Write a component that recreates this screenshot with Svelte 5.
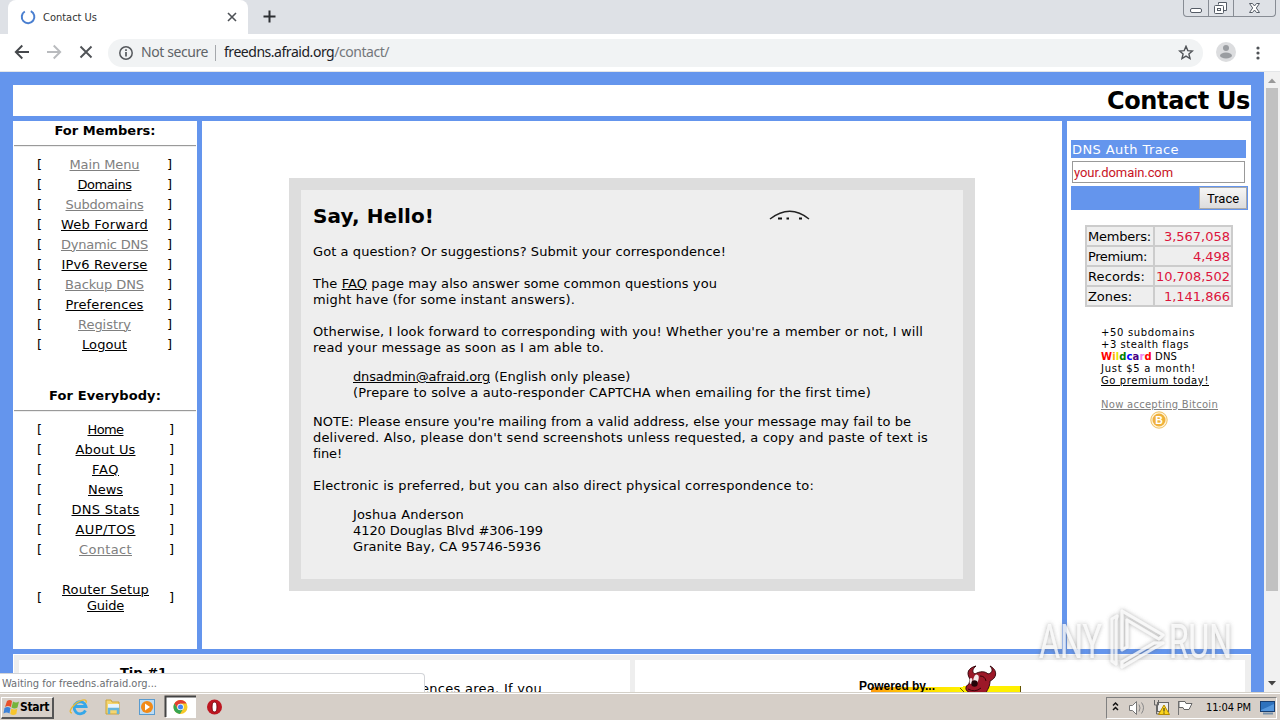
<script>
  // Adjusts letter spacing so a run of text occupies the given width.
  function fit(node, width) {
    const w = node.getBoundingClientRect().width;
    const n = node.textContent.length;
    if (width && n) node.style.letterSpacing = `${(width - w) / n}px`;
  }

  const members = [
    ['Main Menu', 70, true], ['Domains', 54, false], ['Subdomains', 78, true],
    ['Web Forward', 87, false], ['Dynamic DNS', 87, true], ['IPv6 Reverse', 86, false],
    ['Backup DNS', 79, true], ['Preferences', 78, false], ['Registry', 53, true], ['Logout', 45, false]
  ];
  const everybody = [
    ['Home', 36, false], ['About Us', 60, false], ['FAQ', 27, false], ['News', 35, false],
    ['DNS Stats', 68, false], ['AUP/TOS', 60, false], ['Contact', 53, true]
  ];
  const stats = [
    ['Members:', 63, '3,567,058', 66], ['Premium:', 59, '4,498', 37],
    ['Records:', 57, '10,708,502', 74], ['Zones:', 44, '1,141,866', 66]
  ];
  const wild = [['W', 'red'], ['i', 'orange'], ['l', '#e8e800'], ['d', 'green'], ['c', 'blue'], ['a', 'indigo'], ['r', 'violet'], ['d', 'red']];
</script>

<div class="screen">
  <div class="tabs">
    <div class="tab">
      <svg class="spin" width="16" height="16" viewBox="0 0 16 16"><path d="M10.8 2.200A6.300 6.300 0 1 1 4.800 2.500" fill="none" stroke="#4a7fd0" stroke-width="2"/></svg>
      <span class="tabname" use:fit={54}>Contact Us</span>
      <svg class="tabx" width="10" height="10" viewBox="0 0 10 10"><path d="M1 1l8 8M9 1l-8 8" stroke="#4d5156" stroke-width="1.600"/></svg>
    </div>
    <svg class="plus" width="13" height="13" viewBox="0 0 13 13"><path d="M6.500 0.500v12M0.500 6.500h12" stroke="#2c2f33" stroke-width="2"/></svg>
    <div class="winbtns">
      <div><svg width="24" height="16"><rect x="6.500" y="8.500" width="11" height="4" rx="1.500" fill="#fff" stroke="#555c66"/></svg></div>
      <div><svg width="24" height="16"><path d="M9.500 4.500v-2h8v8h-3" fill="#fff" stroke="#555c66"/><rect x="5.500" y="5.500" width="9" height="8" rx="1" fill="#fff" stroke="#555c66"/><rect x="8.500" y="8.500" width="3" height="2" fill="none" stroke="#555c66"/></svg></div>
      <div><svg width="41" height="16"><path d="M15.500 3.500h3l2 2.500 2-2.500h3l-3.200 4.500 3.200 4.500h-3l-2-2.500-2 2.500h-3l3.200-4.500z" fill="#fff" stroke="#555c66"/></svg></div>
    </div>
  </div>

  <div class="toolbar">
    <svg class="nav" width="112" height="38" viewBox="0 0 112 38" fill="none" stroke-width="1.900">
      <path d="M29 18H16M22.300 11.500L15.800 18l6.500 6.500" stroke="#45484c"/>
      <path d="M47 18h13M53.700 11.500l6.500 6.500-6.500 6.500" stroke="#b9bbbe"/>
      <path d="M80.500 12.500l11 11M91.500 12.500l-11 11" stroke="#505357"/>
    </svg>
    <div class="omni">
      <svg class="info" width="14" height="14" viewBox="0 0 14 14"><circle cx="7" cy="7" r="6.200" fill="none" stroke="#55585c" stroke-width="1.500"/><path d="M7 6v4.500M7 3.300v1.600" stroke="#55585c" stroke-width="1.700"/></svg>
      <span class="sec" use:fit={67}>Not secure</span>
      <i class="bar"></i>
      <span class="url" use:fit={165}>freedns.afraid.org<em>/contact/</em></span>
      <svg class="star" width="16" height="16" viewBox="0 0 16 16"><path d="M8 1.300l1.800 4.300 4.600.4-3.500 3 1.100 4.500L8 11.100 4 13.500l1.100-4.500-3.500-3 4.600-.4z" fill="none" stroke="#505357" stroke-width="1.400"/></svg>
    </div>
    <svg class="avatar" width="20" height="20" viewBox="0 0 20 20"><circle cx="10" cy="10" r="10" fill="#dcdddf"/><circle cx="10" cy="6" r="3" fill="#9a9da1"/><ellipse cx="10" cy="13.500" rx="6" ry="3" fill="#9a9da1"/></svg>
    <svg class="dots" width="4" height="14" viewBox="0 0 4 14" fill="#505357"><circle cx="2" cy="2" r="1.600"/><circle cx="2" cy="7" r="1.600"/><circle cx="2" cy="12" r="1.600"/></svg>
  </div>

  <div class="view">
    <div class="page">
      <div class="title"><b use:fit={143}>Contact Us</b></div>
      <div class="cols">
        <div class="left">
          <div class="head"><b use:fit={101}>For Members:</b></div>
          <div class="rule"></div>
          <div class="menu">
            {#each members as [name, w, dim]}
              <div class="row"><span>[</span><a class:dim href="#top" use:fit={w}>{name}</a><span>]</span></div>
            {/each}
          </div>
          <div class="head second"><b use:fit={112}>For Everybody:</b></div>
          <div class="rule"></div>
          <div class="menu every">
            {#each everybody as [name, w, dim]}
              <div class="row"><span>[</span><a class:dim href="#top" use:fit={w}>{name}</a><span>]</span></div>
            {/each}
            <div class="row router"><span>[</span><div><a href="#top" use:fit={87}>Router Setup</a><br /><a href="#top" use:fit={37}>Guide</a></div><span>]</span></div>
          </div>
        </div>

        <div class="mid">
          <div class="card">
            <div class="hello">
              <b use:fit={121}>Say, Hello!</b>
              <svg width="42" height="10" viewBox="0 0 42 10"><path d="M1 9Q21-6.500 40 9" fill="none" stroke="#222" stroke-width="1.500"/><path d="M9 8.500h4M17.500 8.500h2.500M30 8.500h3" stroke="#111" stroke-width="2"/></svg>
            </div>
            <p class="p1"><span use:fit={413}>Got a question? Or suggestions? Submit your correspondence!</span></p>
            <p class="p2"><span use:fit={404}>The <a href="#top">FAQ</a> page may also answer some common questions you</span><br /><span use:fit={262}>might have (for some instant answers).</span></p>
            <p class="p2"><span use:fit={610}>Otherwise, I look forward to corresponding with you! Whether you're a member or not, I will</span><br /><span use:fit={291}>read your message as soon as I am able to.</span></p>
            <p class="q"><span use:fit={278}><a href="#top" use:fit={137}>dnsadmin@afraid.org</a> (English only please)</span><br /><span use:fit={518}>(Prepare to solve a auto-responder CAPTCHA when emailing for the first time)</span></p>
            <p class="p3"><span use:fit={598}>NOTE: Please ensure you're mailing from a valid address, else your message may fail to be</span><br /><span use:fit={615}>delivered. Also, please don't send screenshots unless requested, a copy and paste of text is</span><br /><span use:fit={29}>fine!</span></p>
            <p class="p2"><span use:fit={501}>Electronic is preferred, but you can also direct physical correspondence to:</span></p>
            <p class="q"><span use:fit={111}>Joshua Anderson</span><br /><span use:fit={190}>4120 Douglas Blvd #306-199</span><br /><span use:fit={188}>Granite Bay, CA 95746-5936</span></p>
          </div>
        </div>

        <div class="right">
          <div class="dns"><span use:fit={107}>DNS Auth Trace</span></div>
          <div class="input"><span use:fit={99}>your.domain.com</span></div>
          <div class="trace"><div><span use:fit={32}>Trace</span></div></div>
          <div class="stats">
            {#each stats as [k, kw, v, vw]}
              <div><span use:fit={kw}>{k}</span></div>
              <div class="val"><span use:fit={vw}>{v}</span></div>
            {/each}
          </div>
          <div class="promo">
            <span use:fit={94}>+50 subdomains</span><br />
            <span use:fit={88}>+3 stealth flags</span><br />
            <span use:fit={76}><b>{#each wild as [c, col]}<i style:color={col}>{c}</i>{/each}</b> DNS</span><br />
            <span use:fit={95}>Just $5 a month!</span><br />
            <a href="#top" use:fit={108}>Go premium today!</a>
            <div class="btc"><a class="dim" href="#top" use:fit={117}>Now accepting Bitcoin</a></div>
          </div>
          <svg class="coin" width="18" height="18" viewBox="0 0 18 18"><circle cx="9" cy="9" r="8.200" fill="#fff3d8" stroke="#f0c060"/><circle cx="9" cy="9" r="6.500" fill="#efb13c"/><text x="9" y="12.800" text-anchor="middle" font-family="Liberation Sans" font-weight="700" font-size="10.500" fill="#fff">B</text></svg>
        </div>
      </div>
      <div class="foot">
        <div class="tip"><b use:fit={44}>Tip #1</b><span use:fit={121}>ences area. If you</span></div>
        <div class="powered">
          <svg width="166" height="34" viewBox="0 0 166 34">
            <defs><linearGradient id="yg"><stop offset="0" stop-color="#ff9a10"/><stop offset=".5" stop-color="#ffd800"/><stop offset="1" stop-color="#fff200"/></linearGradient></defs>
            <rect x="12" y="27" width="92" height="6" fill="url(#yg)"/>
            <rect x="104" y="26" width="57" height="7" fill="#fff000"/><path d="M101 28l4 4M161.500 26v7" stroke="#665500"/>
            <text x="0" y="30" font-family="Liberation Sans" font-weight="700" font-size="12" textLength="76">Powered by...</text>
            <path d="M111 19C107 13 109 8 117 6C113 9 113 13 116 14C121 11 126 11 129 14C134 13 134 9 131 6C139 10 138 18 131 21C131 27 128 30 127 33H112C105 31 106 26 110 24Z" fill="#9c1828" stroke="#35070d"/>
            <ellipse cx="117" cy="19" rx="2.500" ry="4.500" fill="#f4e9ea" transform="rotate(15 117 19)"/><ellipse cx="112" cy="21" rx="1.500" ry="3" fill="#f4e9ea"/>
            <circle cx="115.500" cy="23.500" r="3.200" fill="#220408"/><path d="M109 29q7 4 13-1M121 16q5 0 6 5" fill="none" stroke="#3a0208"/>
          </svg>
        </div>
      </div>
    </div>
    <div class="scroll">
      <svg width="16" height="16"><path d="M4 11l4-4.500 4 4.500z" fill="#999"/></svg>
      <div class="thumb"></div>
      <svg width="16" height="18"><path d="M4 7l4 4.500 4-4.500z" fill="#444"/></svg>
    </div>
    <div class="status"><span use:fit={155}>Waiting for freedns.afraid.org...</span></div>
    <svg class="mark" width="204" height="76" viewBox="0 0 204 76">
      <defs><filter id="glow" x="-10%" y="-10%" width="120%" height="120%"><feDropShadow dx="0" dy="0" stdDeviation="2.200" flood-color="#666" flood-opacity=".75"/></filter></defs>
      <g filter="url(#glow)" fill="none" stroke="#fff" stroke-opacity=".75" stroke-width="3" stroke-linejoin="round">
        <g fill="#fff" stroke="none" fill-opacity=".75" font-family="Liberation Sans Narrow, Roboto" font-size="49">
          <text x="5" y="56" textLength="63" lengthAdjust="spacingAndGlyphs">ANY</text>
          <text x="135" y="56" textLength="63" lengthAdjust="spacingAndGlyphs">RUN</text>
        </g>
        <path d="M83 14l-5 3v42l4 3V19z"/>
        <path d="M88 48V9l41 24-4 4-32-19v27z"/>
        <path d="M129 41L88 65v-5l32-19z"/>
      </g>
    </svg>
  </div>

  <div class="taskbar">
    <div class="start">
      <svg width="17" height="17" viewBox="0 0 17 17"><path d="M4 2q3-2 5 0L8 8Q5 6 2 8z" fill="#e8502a"/><path d="M10 2.500q3 2 6 0l-1.500 6q-3 2-6 0z" fill="#75b43c"/><path d="M1.500 9q3-2 6 0l-1 5.500q-3-2-6 0z" fill="#3c82d8"/><path d="M8.300 9.500q3 2 6 0l-1 5.500q-3 2-6 0z" fill="#f7c52c"/></svg>
      <b use:fit={29}>Start</b>
    </div>
    <svg class="apps" width="180" height="26" viewBox="0 0 180 26">
      <path d="M31.500 16.500A6 6 0 1 1 32 12.500H21" fill="none" stroke="#35a7e8" stroke-width="2.800"/><path d="M18 19c-5 0 1-9 8-12 5-2 7-1 6 2" fill="none" stroke="#e9ba35" stroke-width="1.300"/>
      <path d="M52 6h5l1 2h7v12H52z" fill="#f5d66f" stroke="#cda43b"/><path d="M54 10h11v5H54z" fill="#e8f5ff"/><path d="M55 20v-5h9v5" fill="none" stroke="#64b5dc" stroke-width="2.500"/>
      <rect x="85.500" y="5.500" width="15" height="15" fill="#bcdcf5" stroke="#599bcf"/><circle cx="93" cy="13" r="6" fill="#f28a18"/><path d="M91 9.500l5 3.500-5 3.500z" fill="#fff"/>
      <rect x="112" y="2" width="30" height="22" fill="#fff"/><path d="M111.500 23V2.500H142" fill="none" stroke="#444" stroke-width="2"/>
      <circle cx="126.500" cy="13" r="7" fill="#f7c928"/><path d="M120.400 9.500a7 7 0 0 1 12.200 0h-6.100l-3 5z" fill="#e23e32"/><path d="M120.400 9.500a7 7 0 0 0 5.500 10.500l3.500-5.500h-6z" fill="#36a552"/><circle cx="126.500" cy="13" r="3.300" fill="#fff"/><circle cx="126.500" cy="13" r="2.500" fill="#4285f4"/>
      <circle cx="160.500" cy="13" r="7.500" fill="#bd1620"/><ellipse cx="160.500" cy="13" rx="2.500" ry="5" fill="#fff" stroke="#750910"/>
    </svg>
    <div class="tray">
      <svg width="92" height="24" viewBox="0 0 92 24" fill="none">
        <path d="M6 9.500l2.500-2.500 2.500 2.500M6 14l2.500-2.500 2.500 2.500" stroke="#111" stroke-width="1.500"/>
        <path d="M22.500 9.500h3l4-4v13l-4-4h-3z" fill="#fff" stroke="#777"/><path d="M32 8.500q2 3.500 0 7M34.500 6.500q4 5 0 11" stroke="#888"/>
        <rect x="50.500" y="6.500" width="11" height="9" fill="#eee" stroke="#666"/><path d="M47.500 4v5h4V4M49.500 9v9h5" stroke="#666"/><path d="M57 9l5.500 9.500h-11z" fill="#fbd51c" stroke="#b58a00"/><path d="M57 12v3.500M57 16.500v1.200" stroke="#222"/>
        <path d="M71.500 5v14" stroke="#777"/><path d="M72 5.500h6l1 2h6l-3 6h-5l-1-2h-4z" fill="#fff" stroke="#666"/>
      </svg>
      <span use:fit={45}>11:04 PM</span>
      <svg class="desk" width="16" height="14"><rect x=".5" y=".5" width="14" height="10" fill="#2e72bd" stroke="#183e70"/><path d="M1 9L14 3v7H1z" fill="#5597dd"/><path d="M3 12.500h10" stroke="#7790aa" stroke-width="2"/></svg>
    </div>
  </div>
</div>

<style>
  :global(body) { margin: 0; overflow: hidden; }
  .screen { width: 1280px; height: 720px; overflow: hidden; display: flex; flex-direction: column; font: 13px/16px "DejaVu Sans", sans-serif; color: #000; background: #fff; }
  svg { display: block; flex: none; }
  span, b, a { white-space: nowrap; }
  a { color: #000; text-decoration: underline; text-underline-offset: 1px; text-decoration-thickness: 1px; }
  a.dim { color: #808080; }
  p { margin: 0; }
  i, em { font-style: normal; }

  .tabs { height: 34px; flex: none; background: #dee1e6; display: flex; align-items: flex-start; }
  .tab { margin-left: 8px; width: 240px; height: 34px; background: #fff; border-radius: 8px 8px 0 0; display: flex; align-items: center; box-sizing: border-box; padding: 0 11px 0 12px; }
  .tabname { margin-left: 7px; padding-top: 1px; font: 11px/14px "DejaVu Sans Condensed", "DejaVu Sans", sans-serif; color: #333; }
  .tabx { margin-left: auto; }
  .plus { margin: 10px 0 0 15px; }
  .winbtns { margin-left: auto; margin-right: 4px; display: flex; height: 17px; box-sizing: border-box; border: 1px solid #878c94; border-top: 0; border-radius: 0 0 4px 4px; overflow: hidden; }
  .winbtns div + div { border-left: 1px solid #878c94; }

  .toolbar { height: 38px; flex: none; display: flex; align-items: center; background: #fff; box-sizing: border-box; border-bottom: 1px solid #e4e6e8; }
  .nav { margin-right: -4px; }
  .omni { width: 1095px; height: 28px; border-radius: 14px; background: #f1f3f4; display: flex; align-items: center; box-sizing: border-box; padding: 0 9px 0 11px; }
  .sec { margin-left: 8px; padding-bottom: 1px; font: 14px/18px "Noto Sans", sans-serif; color: #606367; }
  .bar { width: 1px; height: 16px; background: #a5a8ac; margin: 0 8px 0 7px; }
  .url { padding-bottom: 1px; font: 14px/18px "Noto Sans", sans-serif; color: #202124; }
  .url em { color: #74777b; }
  .star { margin-left: auto; }
  .avatar { margin: 0 0 1px 13px; }
  .dots { margin-left: 20px; }

  .view { height: 620px; flex: none; position: relative; display: flex; overflow: hidden; }
  .page { width: 1264px; height: 620px; box-sizing: border-box; padding: 13px 13px 0; background: #6495ed; display: flex; flex-direction: column; gap: 5px; overflow: hidden; }
  .title { height: 31px; flex: none; background: #fff; text-align: right; font-size: 24px; line-height: 33px; padding-right: 1px; }
  .cols { height: 528px; flex: none; display: flex; gap: 5px; }
  .left { width: 184px; background: #fff; }
  .head { height: 24px; line-height: 19px; text-align: center; }
  .second { margin-top: 31px; }
  .rule { height: 1px; margin: 0 1px; background: #9a9a9a; border-bottom: 1px solid #eee; }
  .menu { padding: 8px 25px 0 24px; }
  .menu.every { padding: 8px 23px 0 24px; }
  .row { height: 20px; display: flex; align-items: center; justify-content: space-between; line-height: 16px; }
  .router { height: 32px; margin-top: 22px; text-align: center; }
  .mid { width: 860px; background: #fff; box-sizing: border-box; padding: 57px 0 0 87px; }
  .card { width: 686px; height: 413px; box-sizing: border-box; border: 12px solid #ddd; background: #eee; padding: 0 12px; }
  .hello { height: 54px; display: flex; align-items: flex-start; justify-content: space-between; font-size: 20px; line-height: 53px; padding-right: 140px; }
  .hello svg { margin-top: 20px; }
  .card p { line-height: 16px; }
  .card p.p2 { margin-top: 16px; }
  .card p.q { margin: 13px 0 0 40px; }
  .card p.p3 { margin-top: 13px; }
  .right { width: 184px; background: #fff; box-sizing: border-box; padding: 19px 0 0 4px; }
  .dns { width: 175px; height: 18px; background: #6495ed; color: #fff; line-height: 19px; padding-left: 1px; box-sizing: border-box; }
  .input { width: 173px; height: 22px; margin: 3px 0 3px 1px; box-sizing: border-box; border: 1px solid #999; color: #c81426; font: 13px/21px Roboto, sans-serif; padding-left: 1px; }
  .trace { width: 177px; height: 24px; background: #6495ed; display: flex; justify-content: flex-end; box-sizing: border-box; padding: 1px; }
  .trace div { width: 48px; height: 22px; box-sizing: border-box; border: 1px solid #aaa; background: linear-gradient(#f6f6f6, #ddd); text-align: center; font: 13px/21px Roboto, sans-serif; }
  .stats { margin: 15px 0 0 14px; width: 148px; height: 82px; box-sizing: border-box; padding: 2px; background: #ccc; display: grid; grid-template-columns: 66px 76px; grid-auto-rows: 18px; gap: 2px; line-height: 19px; }
  .stats div { background: #eee; padding-left: 1px; }
  .stats .val { text-align: right; color: #dc143c; padding: 0 1px 0 0; }
  .promo { margin: 20px 0 0 30px; font-size: 10px; line-height: 12px; }
  .btc { margin-top: 12px; }
  .coin { margin: 0 0 0 79px; }
  .foot { height: 38px; flex: none; background: #eee; display: flex; gap: 5px; box-sizing: border-box; padding: 5px 6px 0 5px; border-top: 1px solid #fff; border-left: 1px solid #fff; }
  .tip { width: 611px; background: #fff; display: flex; }
  .tip b { margin: 5px 0 0 101px; width: 44px; }
  .tip span { margin: 21px 0 -10px 257px; }
  .powered { width: 610px; background: #fff; padding-left: 224px; box-sizing: border-box; }

  .scroll { width: 16px; background: #f1f1f1; display: flex; flex-direction: column; box-sizing: border-box; }
  .thumb { width: 12px; height: 503px; margin: 0 2px auto; background: #c1c1c1; }
  .status { position: absolute; left: 0; bottom: 0; width: 425px; height: 19px; box-sizing: border-box; border: 1px solid #d2d4d8; border-left: 0; border-bottom: 0; border-radius: 0 4px 0 0; background: #fff; color: #6b6e72; font: 11px/19px "DejaVu Sans Condensed", "DejaVu Sans", sans-serif; padding-left: 2px; }
  .mark { position: absolute; left: 1034px; top: 530px; }

  .taskbar { height: 28px; flex: none; box-sizing: border-box; background: #d6cfc8; border-top: 1px solid #d4d0c8; box-shadow: inset 0 1px #fff; display: flex; align-items: center; }
  .start { width: 53px; height: 22px; margin: 2px 0 0 1px; box-sizing: border-box; border: 1px solid #fff; border-right: 2px solid #555; border-bottom: 2px solid #555; display: flex; align-items: center; padding-left: 1px; font: bold 12px/16px "DejaVu Sans Condensed", sans-serif; }
  .apps { margin-top: 1px; }
  .tray { margin: 2px 3px 0 auto; width: 171px; height: 22px; box-sizing: border-box; border: 1px solid #808080; border-right-color: #fff; border-bottom-color: #fff; display: flex; align-items: center; font: 11px/14px "DejaVu Sans Condensed", "DejaVu Sans", sans-serif; }
  .tray span { margin-left: 7px; }
  .desk { margin: 0 0 0 auto; }
</style>
